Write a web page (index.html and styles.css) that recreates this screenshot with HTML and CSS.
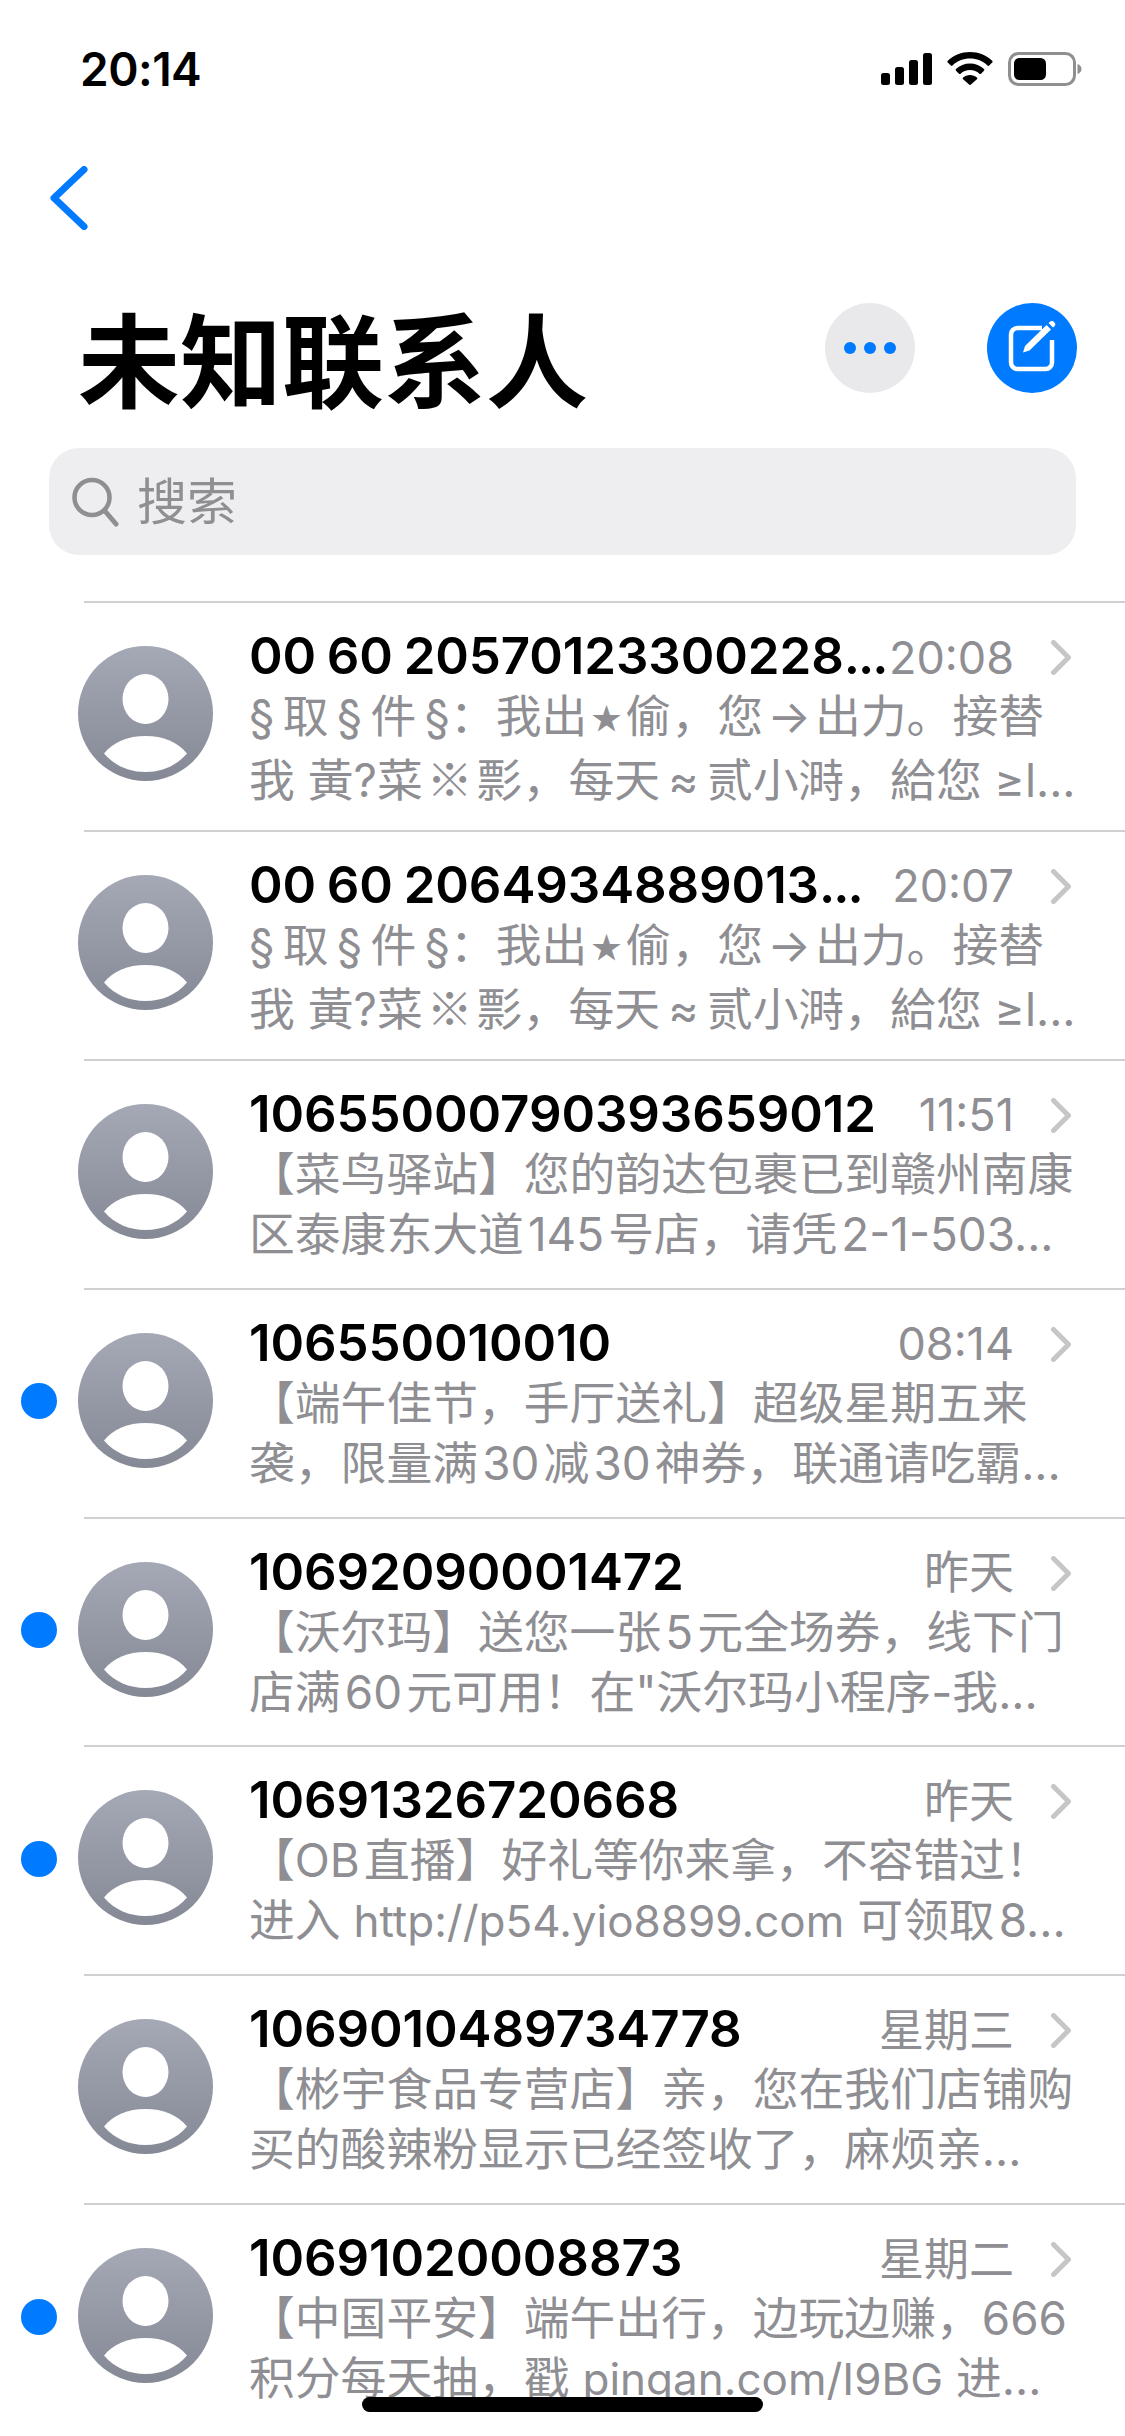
FILE: index.html
```html
<!DOCTYPE html>
<html lang="zh-CN">
<head>
<meta charset="utf-8">
<title>未知联系人</title>
<link rel="stylesheet" href="styles.css">
</head>
<body>
<div class="phone">
  <header class="status">
    <span class="clock">20:14</span>
    <div class="status-icons">
      <svg class="i-signal" width="51" height="32" viewBox="0 0 51 32"><rect x="0" y="20" width="9" height="12" rx="2.5"/><rect x="14" y="14" width="9" height="18" rx="2.5"/><rect x="28" y="7" width="9" height="25" rx="2.5"/><rect x="42" y="0" width="9" height="32" rx="2.5"/></svg>
      <svg class="i-wifi" width="46" height="33" viewBox="0 0 46 33"><path d="M23 0C14.500 0 6.700 3.300 .8 8.800a1.200 1.200 0 0 0 0 1.700l3 3a1.200 1.200 0 0 0 1.700 0C10.100 9.200 16.300 6.600 23 6.600s12.900 2.600 17.500 6.900a1.200 1.200 0 0 0 1.700 0l3-3a1.200 1.200 0 0 0 0-1.700C39.300 3.300 31.500 0 23 0z"/><path d="M23 11.500c-5.400 0-10.300 2-14 5.500a1.200 1.200 0 0 0 0 1.700l3 3a1.200 1.200 0 0 0 1.600 0c2.500-2.200 5.800-3.600 9.400-3.600s6.900 1.400 9.400 3.600a1.200 1.200 0 0 0 1.600 0l3-3a1.200 1.200 0 0 0 0-1.700c-3.700-3.500-8.600-5.500-14-5.500z"/><path d="M23 23c-2.700 0-5.100 1-6.900 2.600a1.200 1.200 0 0 0 0 1.700l6 5.300a1.300 1.300 0 0 0 1.800 0l6-5.300a1.200 1.200 0 0 0 0-1.700C28.100 24 25.700 23 23 23z"/></svg>
      <svg class="i-battery" width="74" height="34" viewBox="0 0 74 34"><rect x="1.500" y="1.500" width="65" height="31" rx="9" fill="none" stroke="#8f8f92" stroke-width="3"/><rect x="6" y="6" width="32" height="22" rx="5.500" fill="#000"/><path d="M69.500 12c2.500 .8 4 2.700 4 5s-1.500 4.200-4 5z" fill="#8f8f92"/></svg>
    </div>
  </header>

  <nav class="nav">
    <svg width="38" height="64" viewBox="0 0 38 64"><path d="M34 3.500 4 32l30 28.500" fill="none" stroke="#007aff" stroke-width="7" stroke-linecap="round" stroke-linejoin="round"/></svg>
  </nav>

  <section class="title-row">
    <h1 class="title">未知联系人</h1>
    <div class="actions">
      <button class="round round-more" type="button" aria-label="更多"><i></i><i></i><i></i></button>
      <button class="round round-compose" type="button" aria-label="新信息">
        <svg width="54" height="54" viewBox="0 0 54 54" fill="none"><path d="M37 7H12.500A6.500 6.500 0 0 0 6 13.500v28A6.500 6.500 0 0 0 12.500 48h28a6.500 6.500 0 0 0 6.500-6.500V19" stroke="#fff" stroke-width="4.500"/><path d="M18 31.500 20 25 41.500 4l4.500 4.500L24.500 29.500z" fill="#fff"/><path d="M43.500 2l1.500-1.300a2.700 2.700 0 0 1 3.700 0l.8.8a2.700 2.700 0 0 1 0 3.700L48 6.500z" fill="#fff"/></svg>
      </button>
    </div>
  </section>

  <div class="search">
    <svg width="47" height="50" viewBox="0 0 47 50" fill="none"><circle cx="20" cy="20.500" r="17.500" stroke="#8e8e93" stroke-width="4.500"/><path d="M32.500 33.500 44 47" stroke="#8e8e93" stroke-width="5" stroke-linecap="round"/></svg>
    <span class="search-text">搜索</span>
  </div>

  <main class="list">
    <article class="row">
      <span class="dot-slot"></span>
      <svg class="avatar" viewBox="0 0 135 135"><use href="#person"/></svg>
      <div class="body">
        <div class="head"><span class="name">00 60 20570123300228<span class="more">...</span></span><time class="when">20:08</time><svg class="chev" width="20" height="35" viewBox="0 0 20 35"><path d="M2.500 2.500 17.500 17.500 2.500 32.500" /></svg></div>
        <p class="line">§&#8201;取&#8201;§&#8201;件&#8201;§：我出&#8202;<span class="star">★</span>&#8202;偷，您&#8202;→&#8202;出力。接替</p>
        <p class="line">我 黃?菜&#8202;<span class="cjk">※</span>&#8202;彯，每天&#8201;≈&#8201;贰小溡，給您 ≥l...</p>
      </div>
    </article>
    <article class="row">
      <span class="dot-slot"></span>
      <svg class="avatar" viewBox="0 0 135 135"><use href="#person"/></svg>
      <div class="body">
        <div class="head"><span class="name">00 60 2064934889013<span class="more">...</span></span><time class="when">20:07</time><svg class="chev" width="20" height="35" viewBox="0 0 20 35"><path d="M2.500 2.500 17.500 17.500 2.500 32.500" /></svg></div>
        <p class="line">§&#8201;取&#8201;§&#8201;件&#8201;§：我出&#8202;<span class="star">★</span>&#8202;偷，您&#8202;→&#8202;出力。接替</p>
        <p class="line">我 黃?菜&#8202;<span class="cjk">※</span>&#8202;彯，每天&#8201;≈&#8201;贰小溡，給您 ≥l...</p>
      </div>
    </article>
    <article class="row">
      <span class="dot-slot"></span>
      <svg class="avatar" viewBox="0 0 135 135"><use href="#person"/></svg>
      <div class="body">
        <div class="head"><span class="name">10655000790393659012</span><time class="when">11:51</time><svg class="chev" width="20" height="35" viewBox="0 0 20 35"><path d="M2.500 2.500 17.500 17.500 2.500 32.500" /></svg></div>
        <p class="line">【菜鸟驿站】您的韵达包裹已到赣州南康</p>
        <p class="line">区泰康东大道&#8202;145&#8202;号店，请凭&#8202;2-1-503...</p>
      </div>
    </article>
    <article class="row">
      <span class="dot-slot"><b class="dot"></b></span>
      <svg class="avatar" viewBox="0 0 135 135"><use href="#person"/></svg>
      <div class="body">
        <div class="head"><span class="name">106550010010</span><time class="when">08:14</time><svg class="chev" width="20" height="35" viewBox="0 0 20 35"><path d="M2.500 2.500 17.500 17.500 2.500 32.500" /></svg></div>
        <p class="line">【端午佳节，手厅送礼】超级星期五来</p>
        <p class="line">袭，限量满&#8202;30&#8202;减&#8202;30&#8202;神券，联通请吃霸...</p>
      </div>
    </article>
    <article class="row">
      <span class="dot-slot"><b class="dot"></b></span>
      <svg class="avatar" viewBox="0 0 135 135"><use href="#person"/></svg>
      <div class="body">
        <div class="head"><span class="name">10692090001472</span><time class="when">昨天</time><svg class="chev" width="20" height="35" viewBox="0 0 20 35"><path d="M2.500 2.500 17.500 17.500 2.500 32.500" /></svg></div>
        <p class="line">【沃尔玛】送您一张&#8202;5&#8202;元全场券，线下门</p>
        <p class="line">店满&#8202;60&#8202;元可用！在"沃尔玛小程序-我...</p>
      </div>
    </article>
    <article class="row">
      <span class="dot-slot"><b class="dot"></b></span>
      <svg class="avatar" viewBox="0 0 135 135"><use href="#person"/></svg>
      <div class="body">
        <div class="head"><span class="name">10691326720668</span><time class="when">昨天</time><svg class="chev" width="20" height="35" viewBox="0 0 20 35"><path d="M2.500 2.500 17.500 17.500 2.500 32.500" /></svg></div>
        <p class="line">【OB&#8202;直播】好礼等你来拿，不容错过！</p>
        <p class="line">进入 <span class="latin">http://p54.yio8899.com</span> 可领取&#8202;8...</p>
      </div>
    </article>
    <article class="row">
      <span class="dot-slot"></span>
      <svg class="avatar" viewBox="0 0 135 135"><use href="#person"/></svg>
      <div class="body">
        <div class="head"><span class="name">1069010489734778</span><time class="when">星期三</time><svg class="chev" width="20" height="35" viewBox="0 0 20 35"><path d="M2.500 2.500 17.500 17.500 2.500 32.500" /></svg></div>
        <p class="line">【彬宇食品专营店】亲，您在我们店铺购</p>
        <p class="line">买的酸辣粉显示已经签收了，麻烦亲...</p>
      </div>
    </article>
    <article class="row">
      <span class="dot-slot"><b class="dot"></b></span>
      <svg class="avatar" viewBox="0 0 135 135"><use href="#person"/></svg>
      <div class="body">
        <div class="head"><span class="name">10691020008873</span><time class="when">星期二</time><svg class="chev" width="20" height="35" viewBox="0 0 20 35"><path d="M2.500 2.500 17.500 17.500 2.500 32.500" /></svg></div>
        <p class="line">【中国平安】端午出行，边玩边赚，666</p>
        <p class="line">积分每天抽，戳 <span class="latin">pingan.com/I9BG</span> 进...</p>
      </div>
    </article>
  </main>

  <div class="home-bar"></div>

  <!-- shared contact placeholder used by every row -->
  <svg class="defs" width="0" height="0">
    <defs>
      <linearGradient id="avatar-fill" x1="0" y1="0" x2="0" y2="1"><stop offset="0" stop-color="#a5a9b5"/><stop offset="1" stop-color="#858995"/></linearGradient>
      <g id="person">
        <circle cx="67.500" cy="67.500" r="67.500" fill="url(#avatar-fill)"/>
        <ellipse cx="67.500" cy="53" rx="23" ry="25" fill="#fff"/>
        <path d="M26 107.500C35 96 50 90 67.500 90s32.500 6 41.500 17.500C98 120 84 126 67.500 126S37 120 26 107.500z" fill="#fff"/>
      </g>
    </defs>
  </svg>
</div>
</body>
</html>
```

FILE: styles.css
```css
* { box-sizing: border-box; }

html, body {
  margin: 0;
  padding: 0;
  background: #fff;
}

body {
  font-family: Inter, "Noto Sans CJK SC", sans-serif;
  color: #000;
}

.phone {
  position: relative;
  width: 1125px;
  height: 2436px;
  overflow: hidden;
}

/* status bar */
.status {
  display: flex;
  align-items: center;
  justify-content: space-between;
  height: 137px;
  padding: 0 43px 0 80px;
}

.clock {
  font-size: 46px;
  font-weight: 600;
  letter-spacing: -0.5px;
}

.status-icons {
  display: flex;
  align-items: center;
  gap: 15px;
}

.status-icons svg { display: block; fill: #000; }

/* back control */
.nav {
  height: 166px;
  padding: 29px 0 0 50px;
}

.nav svg { display: block; }

/* large title with its two round buttons */
.title-row {
  display: flex;
  align-items: flex-start;
  justify-content: space-between;
  height: 145px;
  padding: 0 48px 0 78px;
}

.title {
  margin: 1px 0 0;
  font-size: 102px;
  font-weight: 700;
  line-height: 104px;
  font-family: "Noto Sans CJK SC", sans-serif;
}

.actions {
  display: flex;
  gap: 72px;
}

.round {
  display: flex;
  align-items: center;
  justify-content: center;
  width: 90px;
  height: 90px;
  padding: 0;
  border: 0;
  border-radius: 50%;
}

.round-more { gap: 8px; background: #e9e9eb; }
.round-more i {
  width: 12px;
  height: 12px;
  border-radius: 50%;
  background: #007aff;
}
.round-compose { background: #007aff; }

/* search field */
.search {
  display: flex;
  align-items: center;
  gap: 18px;
  height: 107px;
  margin: 0 49px;
  padding: 0 0 0 23px;
  border-radius: 30px;
  background: #eeeef0;
}

.search-text {
  font-size: 50px;
  line-height: 60px;
  color: #8e8e93;
}

/* message rows */
.list { margin-top: 46px; }

.row {
  position: relative;
  display: flex;
  align-items: flex-start;
  height: 228.9px;
  padding: 25px 0 0 21px;
}

.row::before {
  content: "";
  position: absolute;
  top: 0;
  left: 84px;
  right: 0;
  height: 2px;
  background: #d0d0d3;
}

.dot-slot {
  flex: none;
  display: flex;
  align-items: center;
  width: 36px;
  height: 135px;
  margin-top: 21px;
}

.dot {
  width: 36px;
  height: 36px;
  border-radius: 50%;
  background: #007aff;
}

.avatar {
  flex: none;
  width: 135px;
  height: 135px;
  margin: 20px 0 0 21px;
}

.body {
  flex: 1;
  min-width: 0;
  margin-left: 36px;
  padding-right: 54px;
}

.head {
  display: flex;
  align-items: center;
  height: 60px;
  margin-bottom: 1px;
}

.name {
  flex: 1;
  min-width: 0;
  font-size: 51px;
  font-weight: 600;
  line-height: 60px;
  letter-spacing: -0.1px;
  word-spacing: -2px;
  white-space: nowrap;
}

.more { letter-spacing: -2px; }

.when {
  flex: none;
  margin-top: 3px;
  font-size: 45px;
  line-height: 60px;
  color: #8e8e93;
}

.chev {
  flex: none;
  margin: 3px 0 0 37px;
  fill: none;
  stroke: #c6c6c9;
  stroke-width: 5px;
  stroke-linecap: round;
  stroke-linejoin: round;
}

.line {
  margin: 0;
  font-size: 45.8px;
  line-height: 60px;
  color: #8e8e93;
  white-space: nowrap;
}

.latin { font-size: 44px; }
.cjk { font-family: "Noto Sans CJK SC", sans-serif; }
.star {
  font-family: "Noto Sans CJK SC", sans-serif;
  font-size: 30px;
  line-height: 1;
  vertical-align: 4px;
}

/* home indicator */
.home-bar {
  position: absolute;
  left: 362px;
  bottom: 24px;
  width: 401px;
  height: 15px;
  border-radius: 8px;
  background: #000;
}

.defs { position: absolute; }
```
